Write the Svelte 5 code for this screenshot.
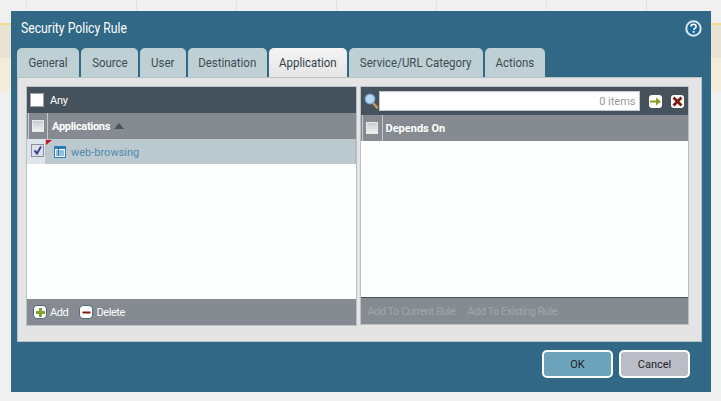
<script>
  const tabs = ['General', 'Source', 'User', 'Destination', 'Application', 'Service/URL Category', 'Actions'];
  const strip = [27, 110, 100, 100, 100, 110, 100];
</script>

<div class="desktop">
  <div class="strip">
    {#each strip as w}<i style="width:{w}px"></i>{/each}
  </div>
  <section class="dialog">
    <header class="title">
      <span class="narrow">Security Policy Rule</span>
      <svg class="help" width="17" height="17" viewBox="0 0 17 17">
        <circle cx="8.5" cy="8.5" r="7.2" fill="#1c6a9a" stroke="#dfeaf0" stroke-width="2" />
        <path d="M6 6.6c0-1.5 1.1-2.2 2.5-2.2s2.6.8 2.6 2.1c0 1.9-2.3 1.8-2.3 3.5" fill="none" stroke="#fff" stroke-width="1.6" />
        <rect x="7.8" y="11" width="1.8" height="1.8" fill="#fff" />
      </svg>
    </header>
    <nav class="tabs">
      {#each tabs as t}
        <div class="tab" class:active={t === 'Application'}><span class="tl">{t}</span></div>
      {/each}
    </nav>
    <div class="panel">
      <div class="col left">
        <div class="anybar">
          <span class="cb any"></span><span class="anylabel">Any</span>
        </div>
        <div class="head">
          <div class="hcb"><span class="cb grey"></span></div>
          <div class="htext">Applications
            <svg width="10" height="6" viewBox="0 0 10 6"><path d="M0 6 5 0 10 6z" fill="#46535d" /></svg>
          </div>
        </div>
        <div class="row">
          <div class="rcb">
            <span class="cb check">
              <svg width="11" height="11" viewBox="0 0 11 11"><path d="M2.5 5.5 5 8.5 9 1.5" fill="none" stroke="#3c3f9c" stroke-width="2" /></svg>
            </span>
          </div>
          <div class="rtext">
            <svg class="flag" width="6" height="5" viewBox="0 0 6 5"><path d="M0 0h6L0 5z" fill="#c8101e" /></svg>
            <svg width="12" height="12" viewBox="0 0 12 12">
              <rect x=".5" y=".5" width="11" height="11" fill="#fff" stroke="#2a7cb8" />
              <path d="M2 5h8M2 7h8M2 9h8M4.5 3v7" fill="none" stroke="#2a7cb8" />
              <rect width="12" height="3" fill="#2a7cb8" />
            </svg>
            <span class="link">web-browsing</span>
          </div>
        </div>
        <div class="list"></div>
        <div class="foot">
          <span class="act">
            <span class="ib round">
              <svg width="11" height="11" viewBox="0 0 11 11"><path d="M4 1h3v3h3v3H7v3H4V7H1V4h3z" fill="#86a02c" /></svg>
            </span>Add
          </span>
          <span class="act">
            <span class="ib round">
              <svg width="11" height="11" viewBox="0 0 11 11"><rect x="1.500" y="4.500" width="8" height="2" fill="#7c1c0c" /></svg>
            </span>Delete
          </span>
        </div>
      </div>

      <div class="col right">
        <div class="searchbar">
          <svg width="15" height="16" viewBox="0 0 15 16">
            <path d="M9 10l4 4.500" stroke="#c99a5a" stroke-width="2.600" stroke-linecap="round" />
            <circle cx="6" cy="6" r="4.800" fill="#b7d8f2" stroke="#7fa9d2" stroke-width="1.200" />
          </svg>
          <div class="input">0 items</div>
          <span class="sq">
            <svg width="11" height="9" viewBox="0 0 11 9"><path d="M0 3.500h6V.5L11 4.500 6 8.500v-3H0z" fill="#86a02c" /></svg>
          </span>
          <span class="sq">
            <svg width="11" height="11" viewBox="0 0 11 11"><path d="M1.500 1.500l8 8M9.500 1.500l-8 8" stroke="#7c1c0c" stroke-width="2.800" /></svg>
          </span>
        </div>
        <div class="head">
          <div class="hcb wide"><span class="cb grey"></span></div>
          <div class="htext b">Depends On</div>
        </div>
        <div class="list dark"></div>
        <div class="foot muted">
          <span>Add To Current Rule</span><span>Add To Existing Rule</span>
        </div>
      </div>
    </div>
    <footer class="btns">
      <button class="ok">OK</button>
      <button class="cancel">Cancel</button>
    </footer>
  </section>
</div>

<style>
  :global(body) { margin: 0; }
  .desktop {
    width: 721px;
    height: 401px;
    box-sizing: border-box;
    padding-left: 11px;
    overflow: hidden;
    font-family: Roboto, "Liberation Sans", Arial, sans-serif;
    background:
      linear-gradient(#f0f0f0 0 23px, #f5d98a 23px 25px, #e9e3d3 25px 58px, #f3ecd9 58px 91px, #f0f0f0 91px);
  }
  .strip { display: flex; height: 11px; margin-left: -11px; }
  .strip i { display: block; box-sizing: border-box; border-right: 1px solid #e2e2e2; height: 11px; }
  .dialog {
    width: 700px;
    height: 381px;
    background: #306886;
    display: flex;
    flex-direction: column;
  }
  .title {
    height: 37px;
    flex: none;
    display: flex;
    align-items: center;
    justify-content: space-between;
    padding: 0 9px 3px 10px;
    box-sizing: border-box;
    color: #fff;
    font-size: 14.500px;
  }
  .narrow { display: inline-block; transform: scaleX(.84); transform-origin: left center; }
  .help { flex: none; }
  .tabs {
    display: grid;
    grid-template-columns: 62px 57px 46px 79px 78px 134px 60px;
    gap: 2px;
    margin-left: 6px;
    height: 29px;
    flex: none;
  }
  .tab {
    background: #bfd0d4;
    color: #3c4a52;
    font-size: 13.500px;
    text-align: center;
    line-height: 28px;
    border-radius: 5px 5px 0 0;
    white-space: nowrap;
    overflow: hidden;
  }
  .tl { display: inline-block; transform: scaleX(.85); margin: 0 -20px; }
  .tab.active { background: linear-gradient(#f4f4f4, #e5e5e5); color: #333f47; }
  .panel {
    margin-left: 6px;
    width: 685px;
    height: 265px;
    flex: none;
    box-sizing: border-box;
    background: #e4e4e4;
    border: 1px solid #b8c4c8;
    padding: 8px 12px 16px 8px;
    display: flex;
    gap: 3px;
  }
  .col {
    box-sizing: border-box;
    border: 1px solid #bcc0c8;
    display: flex;
    flex-direction: column;
    height: 240px;
    width: 331px;
    background: #fdfefe;
  }
  .right { width: 330px; height: 239px; }
  .anybar, .searchbar {
    background: #46535d;
    display: flex;
    align-items: center;
    color: #fff;
    flex: none;
  }
  .anybar { height: 26px; padding-left: 3px; font-size: 11px; letter-spacing: -0.3px; }
  .anylabel { margin-left: 6px; }
  .cb { display: block; box-sizing: border-box; }
  .any { width: 14px; height: 14px; background: #fff; border: 1px solid #9aa3aa; }
  .grey { width: 12px; height: 12px; background: linear-gradient(#c9ccd0, #f0f0f0); border: 1px solid #e6e8ea; }
  .head {
    height: 26px;
    background: #858b91;
    display: flex;
    flex: none;
    color: #fff;
    font-size: 11px;
    font-weight: 700;
  }
  .hcb {
    width: 18px;
    margin-left: 1px;
    border-left: 1px solid #c5cacf;
    border-right: 1px solid #c5cacf;
    display: flex;
    align-items: center;
    justify-content: center;
  }
  .hcb.wide { width: 19px; }
  .htext { display: flex; align-items: center; gap: 4px; padding-left: 4px; letter-spacing: -0.3px; }
  .htext.b { padding-left: 3px; letter-spacing: 0; }
  .row { height: 25px; display: flex; flex: none; }
  .rcb { width: 18px; background: #dfe6ea; padding: 5px 0 0 4px; box-sizing: border-box; }
  .check { width: 13px; height: 13px; background: #dfe0ea; border: 1px solid #8d8f9c; display: flex; align-items: center; justify-content: center; }
  .rtext {
    position: relative;
    flex: 1;
    background: #bccacf;
    display: flex;
    align-items: center;
    gap: 5px;
    padding: 1px 0 0 9px;
    border-right: 1px solid #a9bcc2;
  }
  .flag { position: absolute; left: 1px; top: 1px; }
  .link { color: #5089ac; font-size: 11px; }
  .list { flex: 1; }
  .list.dark { border-bottom: 1px solid #46535d; }
  .foot {
    height: 26px;
    flex: none;
    background: #858b91;
    display: flex;
    align-items: center;
    padding-left: 6px;
    gap: 11px;
    color: #fff;
    font-size: 11px;
    letter-spacing: -0.4px;
  }
  .act { display: flex; align-items: center; gap: 3px; }
  .ib {
    width: 14px; height: 14px; box-sizing: border-box;
    background: #fff; border: 1px solid #54687a; border-radius: 4px;
    display: flex; align-items: center; justify-content: center;
  }
  .muted { color: #a1a6ab; padding-left: 7px; gap: 12px; letter-spacing: -0.5px; }
  .searchbar { height: 28px; padding-left: 3px; }
  .input {
    width: 261px; height: 20px; box-sizing: border-box;
    background: #fff; border: 1px solid #c4c8cc;
    color: #999; font-size: 11px; text-align: right; line-height: 19px; padding-right: 3px;
  }
  .sq {
    width: 13px; height: 13px; background: #fff; border-radius: 3px;
    display: flex; align-items: center; justify-content: center; margin-left: 9px;
  }
  .btns {
    flex: 1;
    display: flex;
    justify-content: flex-end;
    gap: 6px;
    padding: 8px 21px 0 0;
  }
  button {
    width: 71px; height: 28px; box-sizing: border-box; padding: 0;
    border: 2px solid #fff; border-radius: 5px;
    font: 11px Roboto, "Liberation Sans", Arial, sans-serif; color: #1c2228;
  }
  .ok { background: #6ca2ba; }
  .cancel { background: #babcc6; }
</style>
